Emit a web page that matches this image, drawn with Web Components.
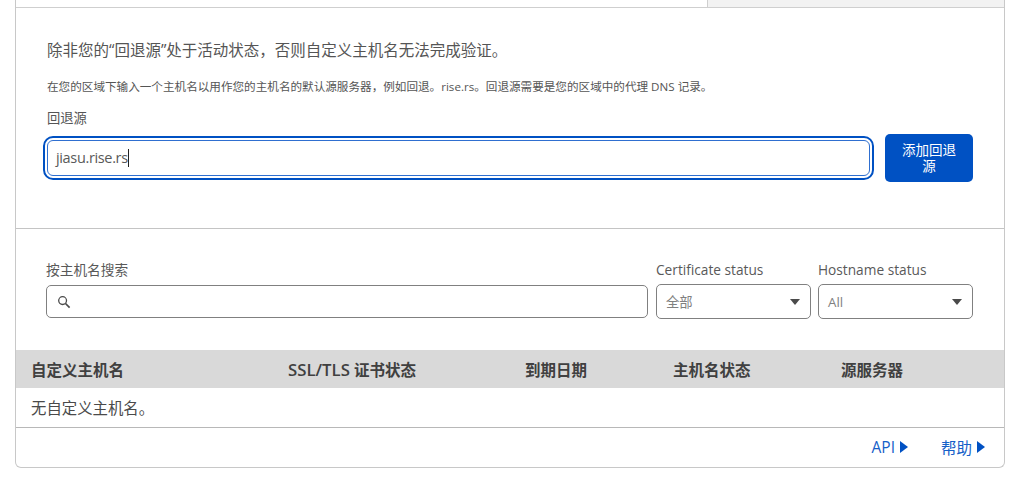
<!DOCTYPE html>
<html lang="zh">
<head>
<meta charset="utf-8">
<title>Custom hostnames</title>
<style>
    html, body { margin: 0; background: #fff; }
    body {
        width: 1024px;
        height: 484px;
        overflow: hidden;
        font-family: "Open Sans", "Noto Sans CJK SC", sans-serif;
        color: #4a4a4a;
    }
</style>
</head>
<body>
<hostname-card>
    <fallback-origin></fallback-origin>
    <hostname-filters></hostname-filters>
    <hostname-table></hostname-table>
    <card-footer>
        <more-link>API</more-link>
        <more-link>帮助</more-link>
    </card-footer>
</hostname-card>

<script>
class HostnameCard extends HTMLElement {
    constructor() {
        super()
        this.attachShadow({ mode: 'open' }).innerHTML = `
            <style>
                :host {
                    display: block;
                    box-sizing: border-box;
                    width: 990px;
                    height: 468px;
                    margin-left: 15px;
                    border: solid #c8c8c8;
                    border-width: 0 1px 1px 1px;
                    border-radius: 0 0 6px 6px;
                    background: #fff;
                }
                .tabs { display: flex; height: 8px; box-sizing: border-box; border-bottom: 1px solid #cfcfcf; }
                .tabs div:first-child { width: 691px; }
                .tabs div:last-child { flex: 1; background: #f2f2f2; border-left: 1px solid #cfcfcf; }
            </style>
            <div class="tabs"><div></div><div></div></div>
            <slot></slot>`
    }
}

class FallbackOrigin extends HTMLElement {
    constructor() {
        super()
        this.attachShadow({ mode: 'open' }).innerHTML = `
            <style>
                :host {
                    display: block;
                    box-sizing: border-box;
                    height: 221px;
                    padding: 32px 31px 0 31px;
                    border-bottom: 1px solid #c4c4c4;
                }
                h2 { margin: 0; font-size: 15.5px; line-height: 20px; font-weight: 400; color: #555; }
                p { margin: 19px 0 0; font-size: 11.6px; line-height: 16px; color: #555; white-space: nowrap; }
                label { display: block; margin-top: 14px; font-size: 13.3px; line-height: 18px; color: #555; }
                .row { display: flex; gap: 11px; margin-top: 7px; align-items: center; }
                .field {
                    flex: 1;
                    box-sizing: border-box;
                    height: 44px;
                    margin-left: -4px;
                    padding: 2px;
                    border: 2px solid #0051c3;
                    border-radius: 10px;
                }
                .field div {
                    box-sizing: border-box;
                    height: 36px;
                    padding-left: 8px;
                    border: 1px solid #2f6fd0;
                    border-radius: 6px;
                    font-size: 14.5px;
                    letter-spacing: -0.35px;
                    line-height: 34px;
                    color: #595959;
                }
                .caret { display: inline-block; width: 1px; height: 18px; background: #222; vertical-align: -4px; }
                button {
                    width: 88px;
                    height: 48px;
                    padding: 0 14px;
                    border: 0;
                    border-radius: 5px;
                    background: #0051c3;
                    color: #fff;
                    font: 13.5px/16px "Open Sans", "Noto Sans CJK SC", sans-serif;
                }
            </style>
            <h2>除非您的“回退源”处于活动状态，否则自定义主机名无法完成验证。</h2>
            <p>在您的区域下输入一个主机名以用作您的主机名的默认源服务器，例如回退。rise.rs。回退源需要是您的区域中的代理 DNS 记录。</p>
            <label>回退源</label>
            <div class="row">
                <div class="field"><div>jiasu.rise.rs<span class="caret"></span></div></div>
                <button>添加回退源</button>
            </div>`
    }
}

class HostnameFilters extends HTMLElement {
    constructor() {
        super()
        this.attachShadow({ mode: 'open' }).innerHTML = `
            <style>
                :host {
                    display: flex;
                    box-sizing: border-box;
                    height: 121px;
                    padding: 32px 31px 0 30px;
                    gap: 7px;
                    align-items: flex-start;
                }
                .group { display: flex; flex-direction: column; }
                .search { flex: 1; margin-right: 1px; }
                label { font-size: 13.7px; line-height: 18px; height: 24px; color: #595959; white-space: nowrap; }
                .box {
                    box-sizing: border-box;
                    display: flex;
                    align-items: center;
                    border: 1px solid #808080;
                    border-radius: 5px;
                    font-size: 13.3px;
                    color: #808080;
                }
                .search .box { height: 33px; padding-left: 10px; }
                .pick { width: 155px; height: 35px; margin-top: -1px; padding: 0 10px 0 9px; justify-content: space-between; }
                svg { display: block; }
            </style>
            <div class="group search">
                <label>按主机名搜索</label>
                <div class="box">
                    <svg width="14" height="14" viewBox="0 0 14 14" fill="none" stroke="#4a4a4a">
                        <circle cx="5.6" cy="5.6" r="3.9" stroke-width="1.3"/>
                        <path d="M8.5 8.5 L12.6 12.6" stroke-width="1.7"/>
                    </svg>
                </div>
            </div>
            <div class="group">
                <label>Certificate status</label>
                <div class="box pick">全部
                    <svg width="10" height="6" viewBox="0 0 10 6"><path d="M0 0 H10 L5 6 Z" fill="#4a4a4a"/></svg>
                </div>
            </div>
            <div class="group">
                <label>Hostname status</label>
                <div class="box pick">All
                    <svg width="10" height="6" viewBox="0 0 10 6"><path d="M0 0 H10 L5 6 Z" fill="#4a4a4a"/></svg>
                </div>
            </div>`
    }
}

class HostnameTable extends HTMLElement {
    constructor() {
        super()
        this.attachShadow({ mode: 'open' }).innerHTML = `
            <style>
                :host { display: block; }
                .head {
                    display: grid;
                    grid-template-columns: 257px 237px 148px 168px 1fr;
                    height: 38px;
                    padding-left: 15px;
                    align-items: center;
                    background: #d9d9d9;
                    font-size: 15.5px;
                    font-weight: 600;
                    color: #404040;
                }
                .latin { font-size: 16.8px; }
                .empty {
                    box-sizing: border-box;
                    height: 40px;
                    padding-left: 15px;
                    line-height: 41px;
                    font-size: 15.4px;
                    color: #4a4a4a;
                    border-bottom: 1px solid #b8b8b8;
                }
            </style>
            <div class="head">
                <div>自定义主机名</div>
                <div><span class="latin">SSL/TLS</span> 证书状态</div>
                <div>到期日期</div>
                <div>主机名状态</div>
                <div>源服务器</div>
            </div>
            <div class="empty">无自定义主机名。</div>`
    }
}

class CardFooter extends HTMLElement {
    constructor() {
        super()
        this.attachShadow({ mode: 'open' }).innerHTML = `
            <style>
                :host {
                    display: flex;
                    justify-content: flex-end;
                    gap: 33px;
                    height: 38px;
                    padding-right: 19px;
                    align-items: center;
                }
            </style>
            <slot></slot>`
    }
}

class MoreLink extends HTMLElement {
    constructor() {
        super()
        this.attachShadow({ mode: 'open' }).innerHTML = `
            <style>
                :host {
                    display: inline-flex;
                    align-items: center;
                    gap: 5px;
                    font-size: 15.5px;
                    color: #1560c8;
                    cursor: pointer;
                }
            </style>
            <slot></slot>
            <svg width="8" height="12" viewBox="0 0 8 12"><path d="M0 0 L8 6 L0 12 Z" fill="#0051c3"/></svg>`
    }
}

customElements.define('hostname-card', HostnameCard)
customElements.define('fallback-origin', FallbackOrigin)
customElements.define('hostname-filters', HostnameFilters)
customElements.define('hostname-table', HostnameTable)
customElements.define('card-footer', CardFooter)
customElements.define('more-link', MoreLink)
</script>
</body>
</html>
